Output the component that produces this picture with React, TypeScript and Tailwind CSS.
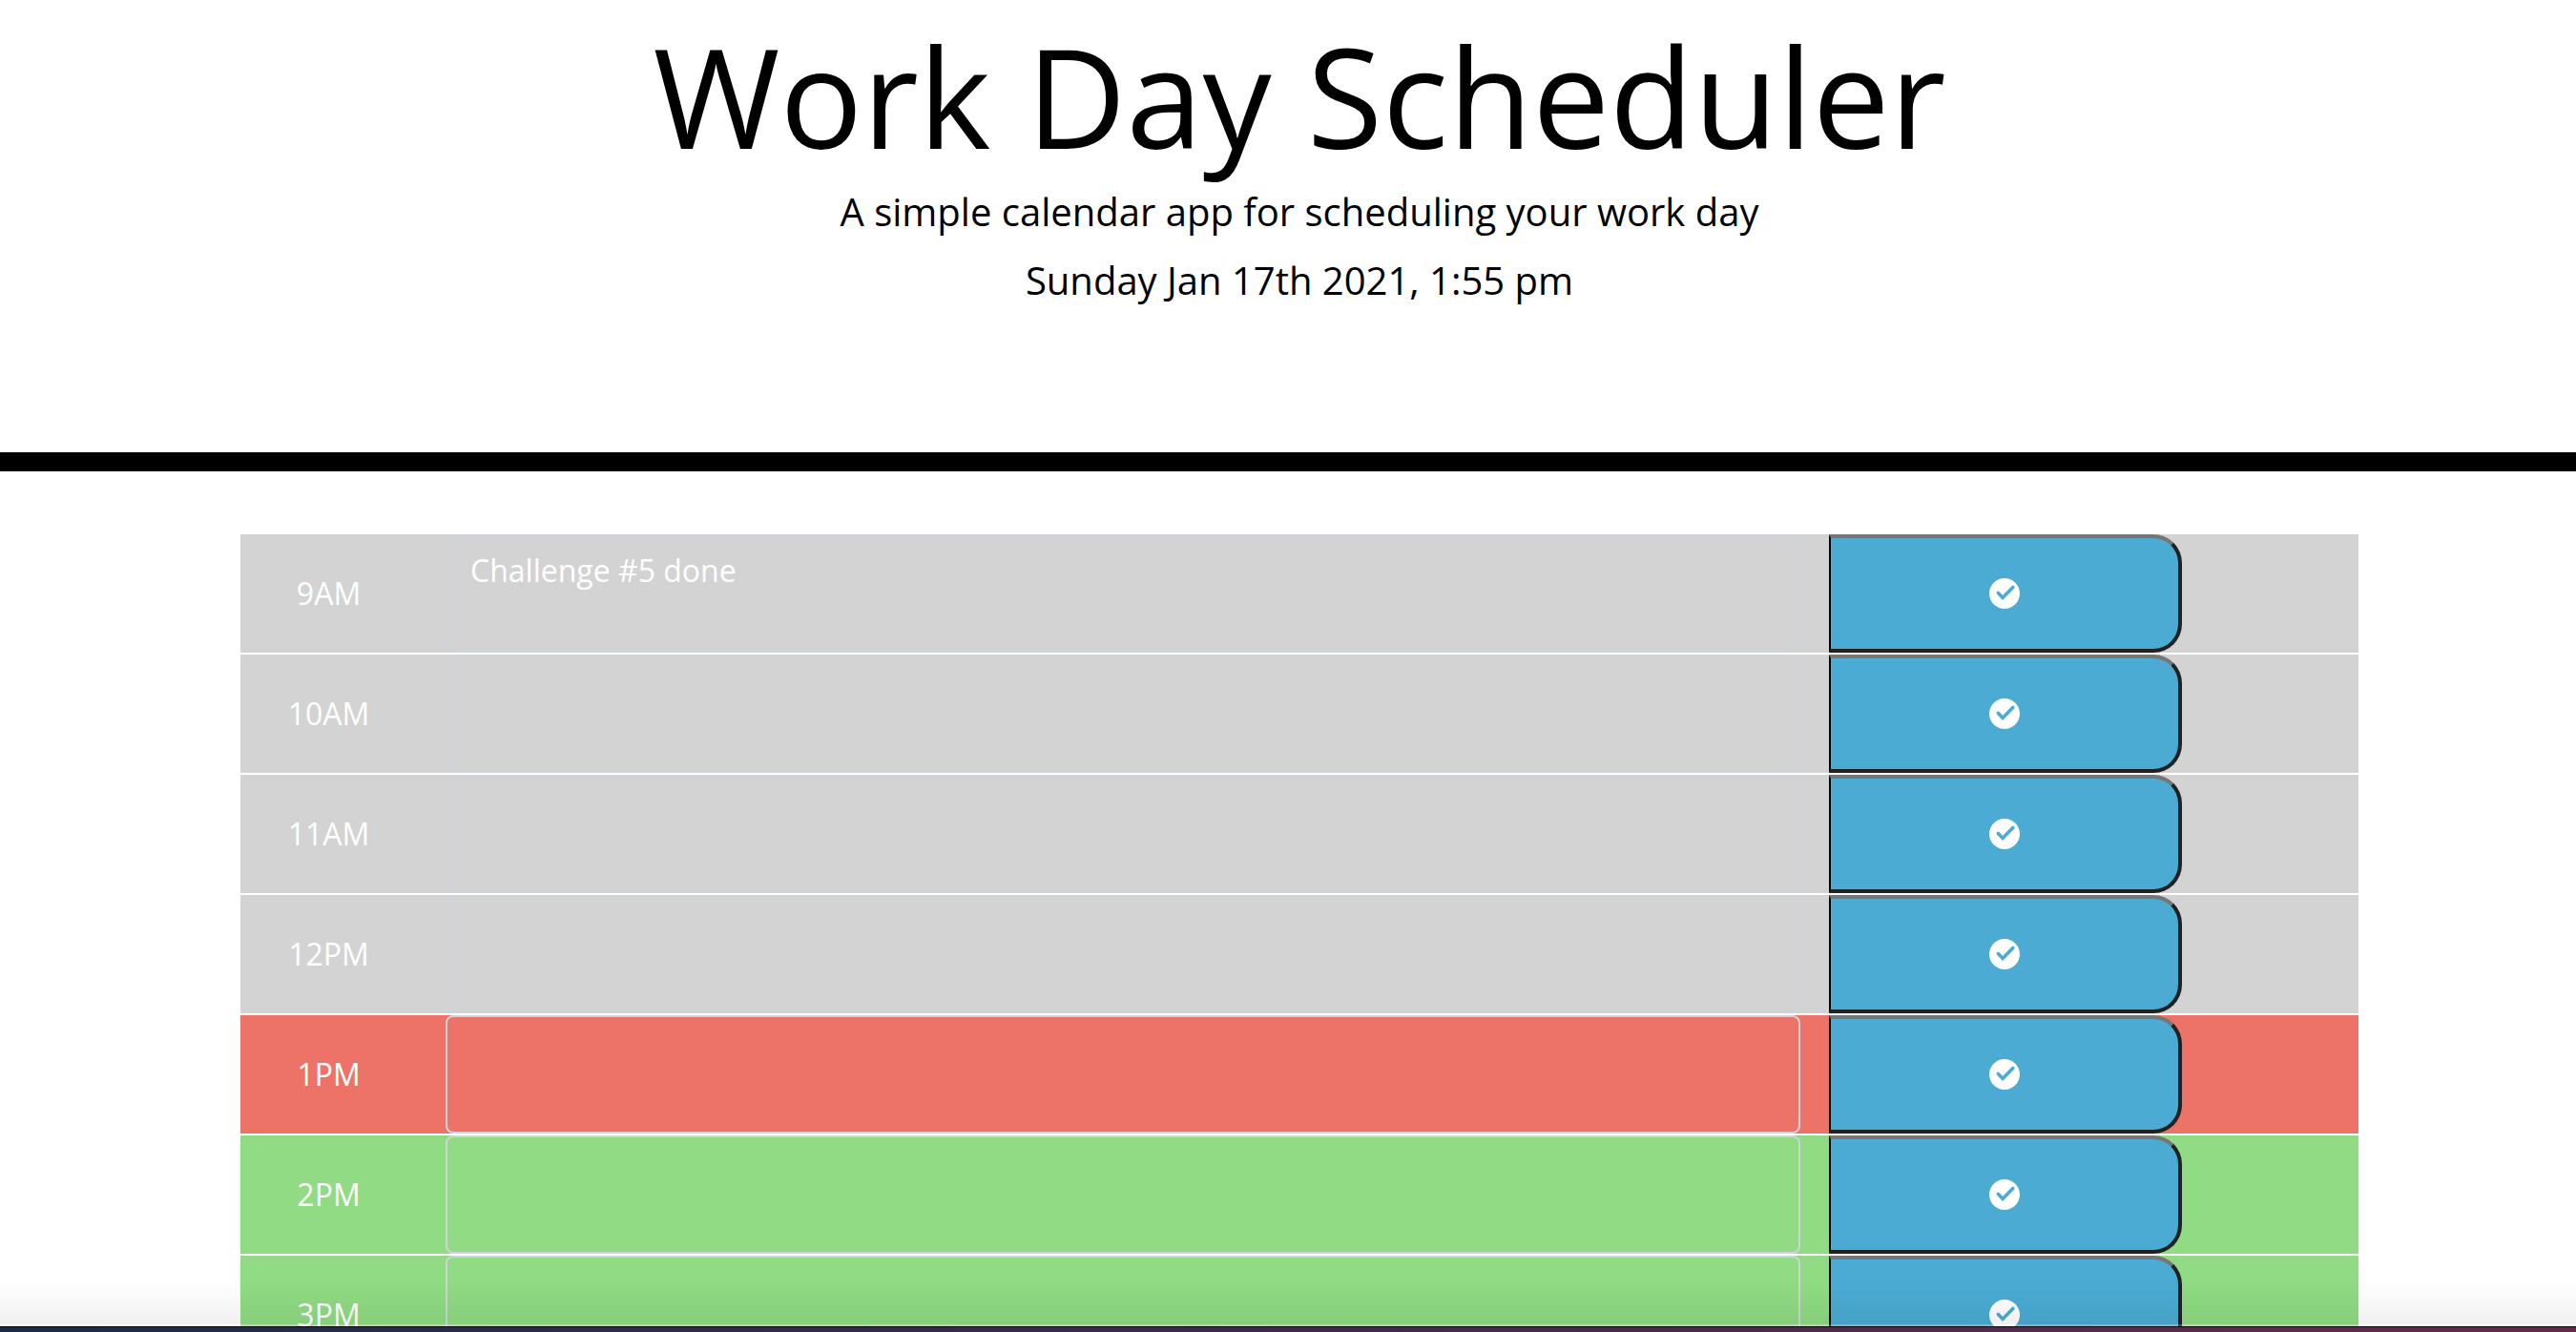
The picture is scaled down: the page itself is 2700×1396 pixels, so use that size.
import { useState } from "react";

type Period = "past" | "present" | "future";

interface Slot {
  label: string;
  period: Period;
  note: string;
}

const slots: Slot[] = [
  { label: "9AM", period: "past", note: "Challenge #5 done" },
  { label: "10AM", period: "past", note: "" },
  { label: "11AM", period: "past", note: "" },
  { label: "12PM", period: "past", note: "" },
  { label: "1PM", period: "present", note: "" },
  { label: "2PM", period: "future", note: "" },
  { label: "3PM", period: "future", note: "" },
];

const periodColor: Record<Period, string> = {
  past: "bg-[#d3d3d3]",
  present: "bg-[#ed7368]",
  future: "bg-[#90db83]",
};

function CheckIcon() {
  return (
    <svg viewBox="0 0 32 32" className="size-8" aria-hidden="true">
      <circle cx="16" cy="16" r="16" fill="white" />
      <path d="M9.4 15.4 14.1 20.4 24.8 9.4" fill="none" stroke="#4babd2" strokeWidth="3.6" strokeLinecap="round" />
    </svg>
  );
}

function TimeBlock({ slot }: { slot: Slot }) {
  const [note, setNote] = useState(slot.note);
  const id = `note-${slot.label}`;
  return (
    <div className={`grid h-[126px] shrink-0 grid-cols-12 border-b-2 border-white ${periodColor[slot.period]}`}>
      <label htmlFor={id} className="flex items-center justify-center">
        {slot.label}
      </label>
      <div className="col-span-8 flex px-[30px]">
        <textarea
          id={id}
          value={note}
          onChange={(e) => setNote(e.target.value)}
          className="w-full resize-none rounded-lg border-2 border-[#ced4da] bg-transparent px-6 py-3 outline-none"
        />
      </div>
      <button
        type="button"
        aria-label={`Save ${slot.label}`}
        className="col-span-2 flex items-center justify-center rounded-r-[30px] border-4 border-l-2 border-t-[#767676] border-r-[#212121] border-b-[#212121] border-l-black bg-[#4babd2]"
      >
        <CheckIcon />
      </button>
    </div>
  );
}

export default function App() {
  return (
    <div className="relative flex h-screen flex-col overflow-hidden bg-white font-['Open_Sans',sans-serif] text-[32px] leading-[48px] text-black">
      <div className="min-h-0 flex-1 overflow-hidden">
        <header className="h-[494px] border-b-[20px] border-black pt-3.5 pl-6 text-center">
          <h1 className="text-[144px] leading-[172px]">Work Day Scheduler</h1>
          <p className="mt-1.5 text-[40px] leading-[60px]">A simple calendar app for scheduling your work day</p>
          <p className="mt-3 text-[40px] leading-[60px]">Sunday Jan 17th 2021, 1:55 pm</p>
        </header>
        <main className="pt-[66px] pl-6">
          <div className="mx-auto flex max-w-[2220px] flex-col text-white">
            {slots.map((slot) => (
              <TimeBlock key={slot.label} slot={slot} />
            ))}
          </div>
        </main>
      </div>
      <div className="pointer-events-none absolute inset-x-0 bottom-1.5 h-12 border-b-2 border-white/20 bg-linear-to-b from-black/0 to-black/6" />
      <footer className="h-1.5 shrink-0 border-t border-black bg-linear-to-r from-[#1b2b47] via-[#40284f] to-[#662a48]" />
    </div>
  );
}
